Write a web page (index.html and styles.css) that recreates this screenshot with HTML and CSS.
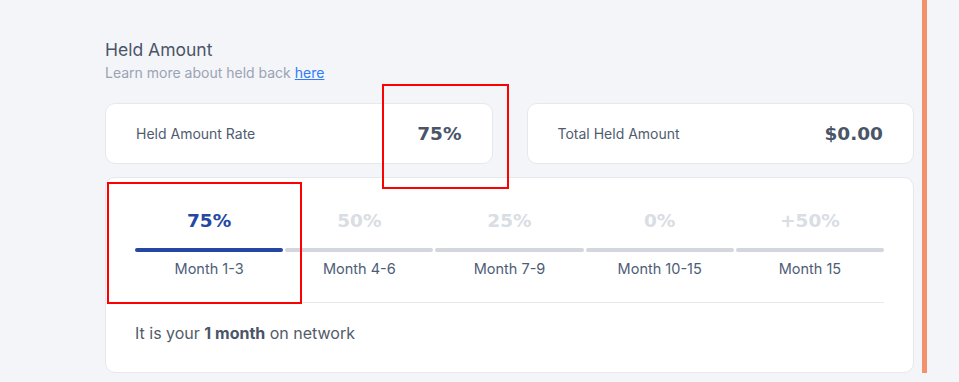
FILE: index.html
```html
<!DOCTYPE html>
<html lang="en">
<head>
  <meta charset="UTF-8">
  <meta name="viewport" content="width=device-width, initial-scale=1.0">
  <title>Held Amount</title>
  <link rel="stylesheet" href="styles.css">
</head>
<body>
  <div class="page">
    <div class="content">
      <!-- Header -->
      <h3 class="title">Held Amount</h3>
      <p class="subtitle">Learn more about held back <a href="#">here</a></p>

      <!-- Summary cards -->
      <div class="summary">
        <div class="card stat">
          <span class="stat-label">Held Amount Rate</span>
          <span class="stat-value">75%</span>
        </div>
        <div class="card stat">
          <span class="stat-label">Total Held Amount</span>
          <span class="stat-value">$0.00</span>
        </div>
      </div>

      <!-- Steps -->
      <div class="card steps-card">
        <div class="steps">
          <div class="step active">
            <div class="step-rate">75%</div>
            <div class="step-bar"></div>
            <div class="step-label">Month 1-3</div>
          </div>
          <div class="step">
            <div class="step-rate">50%</div>
            <div class="step-bar"></div>
            <div class="step-label">Month 4-6</div>
          </div>
          <div class="step">
            <div class="step-rate">25%</div>
            <div class="step-bar"></div>
            <div class="step-label">Month 7-9</div>
          </div>
          <div class="step">
            <div class="step-rate">0%</div>
            <div class="step-bar"></div>
            <div class="step-label">Month 10-15</div>
          </div>
          <div class="step">
            <div class="step-rate">+50%</div>
            <div class="step-bar"></div>
            <div class="step-label">Month 15</div>
          </div>
        </div>
        <div class="divider"></div>
        <p class="network">It is your <b>1 month</b> on network</p>
      </div>
    </div>
    <div class="accent"></div>
  </div>

  <!-- annotation boxes -->
  <div class="mark mark-rate"></div>
  <div class="mark mark-step"></div>
</body>
</html>
```

FILE: styles.css
```css
* {
  box-sizing: border-box;
}

body {
  font-family: Inter, "Liberation Sans", sans-serif;
  background-color: #f4f5f9;
  margin: 0;
  padding: 0;
  position: relative;
  overflow: hidden;
}

.page {
  display: flex;
  align-items: flex-start;
  height: 382px;
}

.content {
  width: 809px;
  margin-left: 105px;
  padding-top: 38px;
}

.accent {
  width: 5px;
  height: 373px;
  margin-left: 8px;
  background: #f2916b;
}

.title {
  margin: 0;
  font-size: 17.5px;
  line-height: 24px;
  font-weight: 400;
  color: #4a5568;
}

.subtitle {
  margin: 1px 0 0;
  font-size: 14px;
  line-height: 20px;
  color: #9aa3b4;
}

.subtitle a {
  color: #2f7cf6;
  text-decoration: underline;
}

.card {
  background: #ffffff;
  border: 1px solid #e6e8ec;
  border-radius: 10px;
}

.summary {
  display: grid;
  grid-template-columns: 1fr 1fr;
  gap: 34px;
  margin-top: 20px;
}

.stat {
  display: flex;
  justify-content: space-between;
  align-items: center;
  height: 61px;
  padding: 0 30px;
}

.stat-label {
  font-size: 14px;
  color: #4f5b70;
}

.stat-value {
  font-family: "DejaVu Sans", sans-serif;
  font-weight: 700;
  font-size: 18.5px;
  color: #4a5568;
}

.steps-card {
  margin-top: 13px;
  height: 196px;
  padding: 32px 29px 0 29px;
}

.steps {
  display: flex;
  gap: 2px;
}

.step {
  flex: 1;
  text-align: center;
}

.step-rate {
  font-family: "DejaVu Sans", sans-serif;
  font-weight: 700;
  font-size: 18.5px;
  line-height: 22px;
  color: #d9dde4;
}

.step-bar {
  height: 4px;
  margin-top: 16px;
  border-radius: 2px;
  background: #d3d6dd;
}

.step-label {
  margin-top: 7px;
  font-size: 14.5px;
  line-height: 20px;
  color: #4d5d78;
}

.step.active .step-rate {
  color: #2547a3;
}

.step.active .step-bar {
  background: #2547a3;
}

.divider {
  height: 1px;
  margin-top: 23px;
  background: #e6e8ec;
}

.network {
  margin: 19px 0 0;
  font-size: 16px;
  line-height: 22px;
  color: #525b68;
}

.network b {
  color: #4a5568;
}

.mark {
  position: absolute;
  border: 2px solid #ff0000;
}

.mark-rate {
  left: 382px;
  top: 84px;
  width: 127px;
  height: 105px;
}

.mark-step {
  left: 107px;
  top: 182px;
  width: 195px;
  height: 122px;
}
```
